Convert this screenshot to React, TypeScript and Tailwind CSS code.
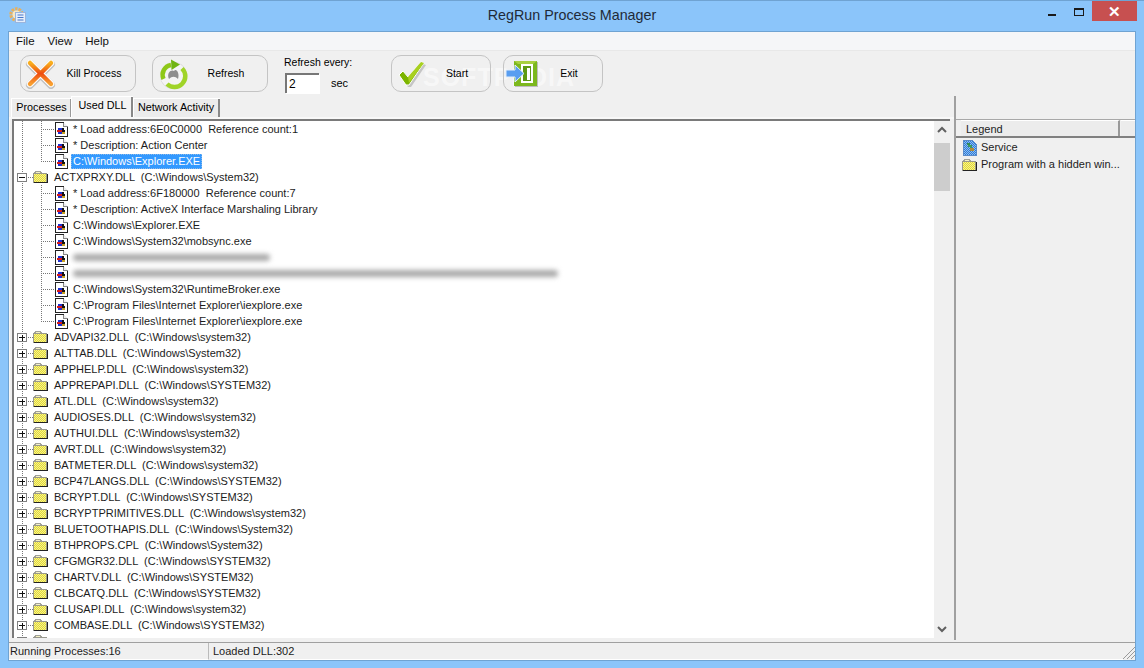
import React from "react";

type Root = { name: string; path: string };

const openFirst = [
  "* Load address:6E0C0000  Reference count:1",
  "* Description: Action Center",
];

const openSecond = [
  "* Load address:6F180000  Reference count:7",
  "* Description: ActiveX Interface Marshaling Library",
  "C:\\Windows\\Explorer.EXE",
  "C:\\Windows\\System32\\mobsync.exe",
  "",
  "",
  "C:\\Windows\\System32\\RuntimeBroker.exe",
  "C:\\Program Files\\Internet Explorer\\iexplore.exe",
  "C:\\Program Files\\Internet Explorer\\iexplore.exe",
];

const roots: Root[] = [
  { name: "ADVAPI32.DLL", path: "C:\\Windows\\system32" },
  { name: "ALTTAB.DLL", path: "C:\\Windows\\System32" },
  { name: "APPHELP.DLL", path: "C:\\Windows\\system32" },
  { name: "APPREPAPI.DLL", path: "C:\\Windows\\SYSTEM32" },
  { name: "ATL.DLL", path: "C:\\Windows\\system32" },
  { name: "AUDIOSES.DLL", path: "C:\\Windows\\system32" },
  { name: "AUTHUI.DLL", path: "C:\\Windows\\system32" },
  { name: "AVRT.DLL", path: "C:\\Windows\\system32" },
  { name: "BATMETER.DLL", path: "C:\\Windows\\system32" },
  { name: "BCP47LANGS.DLL", path: "C:\\Windows\\SYSTEM32" },
  { name: "BCRYPT.DLL", path: "C:\\Windows\\SYSTEM32" },
  { name: "BCRYPTPRIMITIVES.DLL", path: "C:\\Windows\\system32" },
  { name: "BLUETOOTHAPIS.DLL", path: "C:\\Windows\\System32" },
  { name: "BTHPROPS.CPL", path: "C:\\Windows\\System32" },
  { name: "CFGMGR32.DLL", path: "C:\\Windows\\SYSTEM32" },
  { name: "CHARTV.DLL", path: "C:\\Windows\\SYSTEM32" },
  { name: "CLBCATQ.DLL", path: "C:\\Windows\\SYSTEM32" },
  { name: "CLUSAPI.DLL", path: "C:\\Windows\\system32" },
  { name: "COMBASE.DLL", path: "C:\\Windows\\SYSTEM32" },
];

const FolderIcon = () => (
  <svg width="16" height="14" viewBox="0 0 16 14" shapeRendering="crispEdges" className="shrink-0">
    <defs>
      <pattern id="dither" width="2" height="2" patternUnits="userSpaceOnUse">
        <rect width="2" height="2" fill="#f8f488" />
        <rect width="1" height="1" fill="#e0d63c" />
        <rect x="1" y="1" width="1" height="1" fill="#e0d63c" />
      </pattern>
    </defs>
    <path d="M1.5 3.5V2.5H2.5V1.5H7.5V2.5H8.5V3.5" fill="#f4f0c4" stroke="#a0a098" />
    <rect x="0.5" y="3.5" width="13" height="8.5" fill="url(#dither)" stroke="#98988e" />
    <path d="M14.5 4V12.5H1" fill="none" stroke="#222" />
  </svg>
);

const ExeIcon = () => (
  <svg width="13" height="15" viewBox="0 0 13 15" shapeRendering="crispEdges" className="shrink-0">
    <path d="M0.5 0.5H8.5L12.5 4.5V14.5H0.5Z" fill="#fff" stroke="#222" />
    <path d="M8.5 0.5V4.5H12.5" fill="#eee" stroke="#888" />
    <rect x="3" y="6" width="4" height="2" fill="#1f2fd0" />
    <rect x="7" y="6" width="2" height="2" fill="#111" />
    <rect x="2" y="8" width="5" height="2" fill="#d81818" />
    <rect x="7" y="8" width="3" height="2" fill="#111" />
    <rect x="3" y="10" width="4" height="2" fill="#1f2fd0" />
    <rect x="7" y="10" width="3" height="2" fill="#c8a020" />
  </svg>
);

const ServiceIcon = () => (
  <svg width="14" height="16" viewBox="0 0 14 16" shapeRendering="crispEdges" className="shrink-0">
    <defs>
      <pattern id="svc" width="2" height="2" patternUnits="userSpaceOnUse">
        <rect width="2" height="2" fill="#8cc0f0" />
        <rect width="1" height="1" fill="#2f78d8" />
        <rect x="1" y="1" width="1" height="1" fill="#2f78d8" />
      </pattern>
    </defs>
    <path d="M0.5 0.5H9.5L13.5 4.5V15.5H0.5Z" fill="url(#svc)" stroke="#5a8ac8" />
    <rect x="4" y="3" width="3" height="2" fill="#2f8a58" />
    <rect x="5" y="5" width="4" height="2" fill="#3c9a60" />
    <rect x="7" y="7" width="2" height="1" fill="#3c9a60" />
    <rect x="7" y="8" width="4" height="3" fill="#b08a3c" />
  </svg>
);

// tree guides, drawn for each row
const ChildGuide = ({ last }: { last: boolean }) => (
  <svg width="40" height="16" className="shrink-0" shapeRendering="crispEdges">
    <path d="M8 0V16" stroke="#777" strokeDasharray="1 1" />
    <path d={last ? "M27 0V8" : "M27 0V16"} stroke="#777" strokeDasharray="1 1" />
    <path d="M27 8.5H40" stroke="#777" strokeDasharray="1 1" />
  </svg>
);

const RootGuide = ({ open }: { open?: boolean }) => (
  <svg width="19" height="16" className="shrink-0" shapeRendering="crispEdges">
    <path d="M8 0V16" stroke="#777" strokeDasharray="1 1" />
    <path d="M12 8.5H19" stroke="#777" strokeDasharray="1 1" />
    <rect x="3.5" y="4.5" width="9" height="8" fill="#fff" stroke="#808080" />
    <path d="M5 8.5H11" stroke="#111" />
    {!open && <path d="M8.5 6V12" stroke="#111" />}
  </svg>
);

const ChildRow = ({ text, last, selected, blur }: { text: string; last?: boolean; selected?: boolean; blur?: number }) => (
  <div className="flex h-4 items-center">
    <ChildGuide last={!!last} />
    <div className="ml-px flex items-center">
      <ExeIcon />
    </div>
    {blur ? (
      <div className="ml-[5px] h-[7px] rounded bg-[#a8a8a8] blur-[2.5px]" style={{ width: blur }} />
    ) : (
      <span
        className={
          selected
            ? "ml-[3px] flex h-[15px] items-center border border-dotted border-[#8ab8e8] bg-[#3399ff] px-px text-white"
            : "ml-[5px]"
        }
      >
        {text}
      </span>
    )}
  </div>
);

const RootRow = ({ name, path, open }: { name: string; path: string; open?: boolean }) => (
  <div className="flex h-4 items-center">
    <RootGuide open={open} />
    <FolderIcon />
    <span className="ml-[5px] whitespace-pre">{name ? `${name}  (${path})` : ""}</span>
  </div>
);

const ToolButton = ({ label, icon, width, labelWidth }: { label: string; icon: React.ReactNode; width: string; labelWidth: string }) => (
  <div className={`relative z-10 flex h-[37px] items-center rounded-[10px] border border-[#c4c4c4] ${width}`}>
    <div className="flex w-[40px] shrink-0 items-center justify-center">{icon}</div>
    <span className={`text-center ${labelWidth}`}>{label}</span>
  </div>
);

const KillIcon = () => (
  <svg width="34" height="30" viewBox="0 0 34 30">
    <defs>
      <linearGradient id="kill" x1="0" y1="0" x2="0" y2="1">
        <stop offset="0" stopColor="#f8b020" />
        <stop offset="0.5" stopColor="#ee4c10" />
        <stop offset="1" stopColor="#f8a030" />
      </linearGradient>
    </defs>
    <path d="M6 5L27 26M27 5L6 26" stroke="#8a8a8a" strokeWidth="8" strokeLinecap="round" opacity="0.45" />
    <path d="M6 4L27 25M27 4L6 25" stroke="#fff" strokeWidth="6.5" strokeLinecap="round" />
    <path d="M6 4L27 25M27 4L6 25" stroke="url(#kill)" strokeWidth="4.5" strokeLinecap="round" />
  </svg>
);

const RefreshIcon = () => (
  <svg width="30" height="32" viewBox="0 0 30 32">
    <circle cx="15.5" cy="17.5" r="13.5" fill="#bdbdbd" opacity="0.7" />
    <circle cx="15" cy="17" r="13" fill="#f4f4f4" />
    <path d="M11 21C8 14 14 11 16 13C18 10 22 15 20 21C17 18 14 18 11 21Z" fill="#8e8e8e" />
    <path d="M5.5 21A10 10 0 0 1 13 7" fill="none" stroke="#8ec818" strokeWidth="4.5" />
    <path d="M24 10.5A10.5 10.5 0 0 1 9 26" fill="none" stroke="#a0d428" strokeWidth="4.5" />
    <path d="M13 1.5L22 6.5L13.5 12Z" fill="#70b412" />
  </svg>
);

const CheckIcon = () => (
  <svg width="28" height="26" viewBox="0 0 28 26">
    <path d="M2 15L6 11L11 17L24 2L27 3L12 25H9Z" fill="#a8a8a8" transform="translate(1 1)" opacity="0.6" />
    <path d="M1 14L5 10L10 16L23 1L26 2L11 24H8Z" fill="#7cb400" stroke="#fff" strokeWidth="1" />
    <path d="M10 16L23 1L26 2L11 22Z" fill="#a8d020" />
  </svg>
);

const ExitIcon = () => (
  <svg width="34" height="28" viewBox="0 0 34 28" className="-ml-1">
    <rect x="10" y="2" width="23" height="25" fill="#8a8a8a" opacity="0.5" />
    <rect x="9" y="1" width="23" height="25" fill="#7cb81c" />
    <path d="M9 1H32L28 4H13Z" fill="#a8d040" />
    <rect x="16" y="4" width="12" height="19" fill="#fff" />
    <rect x="18" y="6" width="8" height="15" fill="#5e9a14" />
    <rect x="22" y="8" width="3" height="12" fill="#fff" />
    <path d="M1 10H10V5L19 13.5L10 22V17H1Z" fill="#5a9ef0" stroke="#e4eefa" />
  </svg>
);

const AppIcon = () => (
  <svg width="17" height="17" viewBox="0 0 17 17">
    <circle cx="7.5" cy="7.5" r="5.5" fill="none" stroke="#e6b060" strokeWidth="3.5" strokeDasharray="2.4 1" />
    <circle cx="7.5" cy="7.5" r="4" fill="#f8e8c4" />
    <rect x="6.5" y="5.5" width="10" height="10" fill="#e4eefb" stroke="#9ab4dc" />
    <path d="M8.5 8H14.5M8.5 10.5H14.5M8.5 13H14.5" stroke="#4a78c8" />
  </svg>
);

export default function App() {
  return (
    <div className="flex h-[668px] w-[1144px] flex-col overflow-hidden border-t border-[#6fa3d2] bg-[#8bc5fa] font-['Liberation_Sans',sans-serif] text-[11px] leading-none text-black">
      {/* title bar */}
      <div className="relative flex h-[30px] shrink-0 items-center justify-center pb-[1px]">
        <div className="absolute top-[6px] left-[9px]">
          <AppIcon />
        </div>
        <span className="text-[14.3px] text-[#1f2a38]">RegRun Process Manager</span>
        <div className="absolute top-0 right-[7px] flex items-start">
          <div className="mt-[13px] mr-[18px] h-[2px] w-[8px] bg-[#1a1a1a]" />
          <div className="mt-[7px] mr-[8px] h-[8px] w-[10px] border border-t-2 border-[#1a1a1a]" />
          <div className="flex h-[20px] w-[45px] items-center justify-center bg-[#c75050] text-[15px] font-bold text-white">
            ✕
          </div>
        </div>
      </div>

      {/* client area */}
      <div className="mx-2 flex min-h-0 flex-1 flex-col border border-[#6fa3d2] bg-[#f0f0f0]">
        <div className="flex h-[19px] shrink-0 items-center gap-[13px] border-b border-[#e8e8e8] bg-[#f5f6f8] pl-[7px] pt-[1px] text-[11.5px] text-[#111]">
          <span>File</span>
          <span>View</span>
          <span>Help</span>
        </div>

        {/* toolbar */}
        <div className="relative flex h-[45px] shrink-0 items-start pt-[4px] pl-[11px] text-[10.5px]">
          <ToolButton label="Kill Process" width="w-[116px]" labelWidth="w-[66px]" icon={<KillIcon />} />
          <div className="ml-4">
            <ToolButton label="Refresh" width="w-[116px]" labelWidth="w-[66px]" icon={<RefreshIcon />} />
          </div>
          <div className="ml-4 flex w-[107px] flex-col">
            <span className="mt-[2px] mb-[5px]">Refresh every:</span>
            <div className="flex items-center">
              <div className="ml-px flex h-[20px] w-[34px] items-center border-2 border-r-0 border-b-0 border-[#777] bg-white pl-[2px] text-[12px] shadow-[1px_1px_0_#fff]">
                2
              </div>
              <span className="ml-[12px] pt-[2px] text-[11px]">sec</span>
            </div>
          </div>
          <ToolButton label="Start" width="w-[100px]" labelWidth="w-[50px]" icon={<CheckIcon />} />
          <div className="ml-3">
            <ToolButton label="Exit" width="w-[100px]" labelWidth="w-[50px]" icon={<ExitIcon />} />
          </div>
          <span className="pointer-events-none absolute top-[14px] left-[414px] text-[25px] font-bold tracking-[1px] text-white/50">
            SOFTPEDIA
          </span>
        </div>

        {/* panels */}
        <div className="flex min-h-0 flex-1">
          <div className="flex w-[947px] shrink-0 flex-col border-r-2 border-[#a0a0a0]">
            {/* tabs */}
            <div className="flex h-[21px] shrink-0 items-end pl-[2px] text-[10.8px]">
              <div className="flex h-[19px] w-[60px] items-center justify-center border-t border-l border-[#fff] bg-[#ececec] pb-[1px] shadow-[inset_-1px_0_0_#999]">
                Processes
              </div>
              <div className="flex h-[21px] w-[62px] items-center justify-center border-t border-l border-[#fff] bg-[#f4f4f4] pb-[3px] shadow-[inset_-2px_0_0_#888]">
                Used DLL
              </div>
              <div className="flex h-[19px] w-[87px] items-center justify-center border-t border-l border-[#fff] bg-[#ececec] pb-[1px] pr-[2px] shadow-[inset_-2px_0_0_#888]">
                Network Activity
              </div>
            </div>
            {/* tree */}
            <div className="min-h-0 flex-1 border-t-2 border-l border-[#f8f8f8] pl-[2px] pr-[4px] pb-[2px]">
              <div className="flex h-full border-t-2 border-l-2 border-[#7a7a7a] bg-white text-[11px] text-[#1c1c1c]">
                <div className="min-w-0 flex-1 overflow-hidden whitespace-pre">
                  <ChildRow text={openFirst[0]} />
                  <ChildRow text={openFirst[1]} />
                  <ChildRow text="C:\Windows\Explorer.EXE" last selected />
                  <RootRow name="ACTXPRXY.DLL" path="C:\Windows\System32" open />
                  {openSecond.map((text, i) => (
                    <ChildRow
                      key={i}
                      text={text}
                      last={i === openSecond.length - 1}
                      blur={i === 4 ? 197 : i === 5 ? 485 : undefined}
                    />
                  ))}
                  {roots.map((r) => (
                    <RootRow key={r.name} name={r.name} path={r.path} />
                  ))}
                  <RootRow name="" path="" />
                </div>
                {/* scrollbar */}
                <div className="flex w-[16px] shrink-0 flex-col items-center bg-[#f0f0f0]">
                  <svg width="16" height="22" viewBox="0 0 16 22" className="shrink-0">
                    <path d="M4 11L8 7L12 11" fill="none" stroke="#606060" strokeWidth="2" />
                  </svg>
                  <div className="h-[48px] w-full bg-[#cdcdcd]" />
                  <div className="flex-1" />
                  <svg width="16" height="18" viewBox="0 0 16 18" className="shrink-0">
                    <path d="M4 7L8 11L12 7" fill="none" stroke="#606060" strokeWidth="2" />
                  </svg>
                </div>
              </div>
            </div>
          </div>

          {/* legend */}
          <div className="flex min-w-0 flex-1 flex-col pt-[23px] text-[11px] text-[#1c1c1c]">
            <div className="flex h-[19px] shrink-0 border-t border-b-2 border-t-[#a8a8a8] border-b-[#808080] pl-[5px]">
              <div className="flex w-[159px] items-center border-t border-r-2 border-t-[#fff] border-r-[#999] bg-[#ececec] pt-[2px] pl-[5px]">
                Legend
              </div>
              <div className="ml-px flex-1 border-t border-t-[#fff] bg-[#ececec]" />
            </div>
            <div className="flex h-[18px] items-center gap-[4px] pl-[7px] pt-[2px]">
              <ServiceIcon />
              <span className="-mt-[1px]">Service</span>
            </div>
            <div className="flex h-[17px] items-center gap-[3px] pl-[6px]">
              <FolderIcon />
              <span>Program with a hidden win...</span>
            </div>
          </div>
        </div>

        {/* status bar */}
        <div className="mt-[2px] flex h-[18px] shrink-0 border-t border-[#a0a0a0] text-[11px] text-[#1c1c1c]">
          <div className="flex w-[200px] items-center border-r border-b border-r-[#bbb] border-b-white pl-[1px]">
            Running Processes:16
          </div>
          <div className="ml-[3px] flex flex-1 items-center border-b border-b-white pl-[1px]">Loaded DLL:302</div>
          <svg width="12" height="12" viewBox="0 0 12 12" className="mt-[4px] shrink-0">
            <path d="M0 12L12 0M4 12L12 4M8 12L12 8" stroke="#999" />
          </svg>
        </div>
      </div>
      <div className="h-[7px] shrink-0" />
    </div>
  );
}
